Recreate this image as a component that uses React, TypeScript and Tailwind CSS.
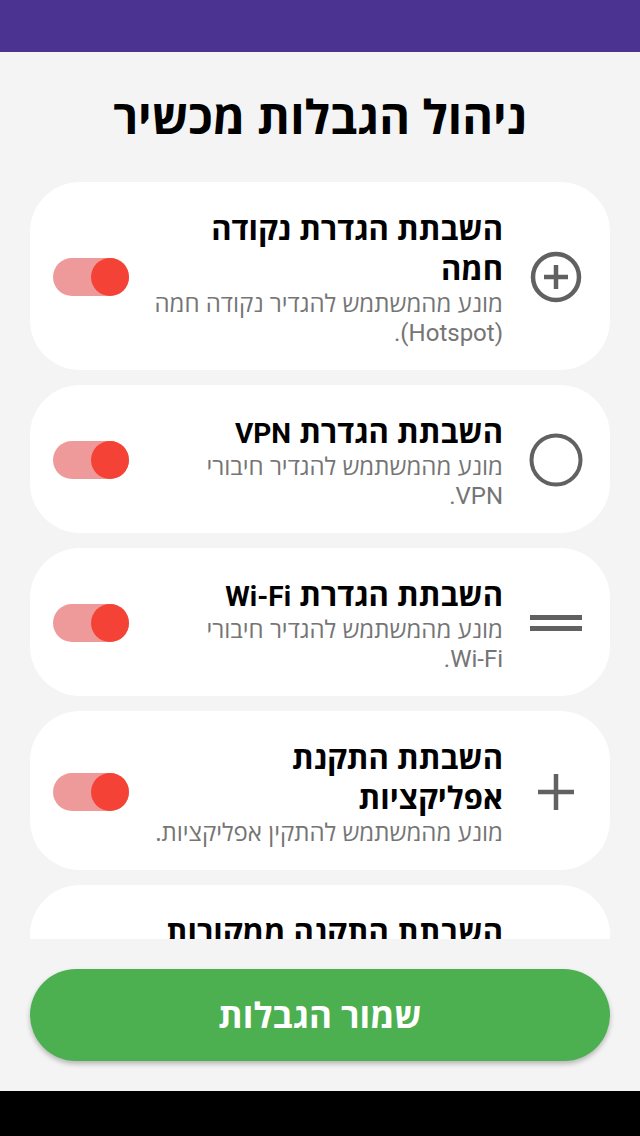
import React from "react";

const HEB = { fontFamily: '"Open Sans", "DejaVu Sans", sans-serif' };
const LAT = { fontFamily: 'Roboto, "Open Sans", sans-serif' };

function Toggle() {
  return (
    <div className="relative w-[76px] h-[38px] rounded-full bg-[#EF9A9A] shrink-0">
      <div className="absolute left-[38px] top-0 w-[38px] h-[38px] rounded-full bg-[#F44336]" />
    </div>
  );
}

function IconAddCircle() {
  return (
    <svg width="54" height="54" viewBox="0 0 54 54" fill="none" stroke="#616161">
      <circle cx="27" cy="27" r="23" strokeWidth="4.5" />
      <path d="M27 15v24M15 27h24" strokeWidth="4.5" />
    </svg>
  );
}
function IconCircle() {
  return (
    <svg width="54" height="54" viewBox="0 0 54 54" fill="none" stroke="#616161">
      <circle cx="27" cy="27" r="24.5" strokeWidth="4" />
    </svg>
  );
}
function IconLines() {
  return (
    <svg width="54" height="54" viewBox="0 0 54 54" fill="#616161">
      <rect x="1" y="19" width="52" height="5" />
      <rect x="1" y="30" width="52" height="5" />
    </svg>
  );
}
function IconPlus() {
  return (
    <svg width="54" height="54" viewBox="0 0 54 54" fill="none" stroke="#616161">
      <path d="M27 9v36M9 27h36" strokeWidth="4.5" />
    </svg>
  );
}

type Item = { title: React.ReactNode; desc: React.ReactNode; icon: React.ReactNode };

const LT = ({ children }: { children: React.ReactNode }) => (
  <span style={LAT} className="text-[28px] leading-none whitespace-nowrap">
    {children}
  </span>
);
const LD = ({ children }: { children: React.ReactNode }) => (
  <span style={LAT} className="text-[24px] leading-none whitespace-nowrap">
    {children}
  </span>
);

const items: Item[] = [
  {
    title: "השבתת הגדרת נקודה חמה",
    desc: (
      <>
        מונע מהמשתמש להגדיר נקודה חמה
        <br />
        <LD>(Hotspot).</LD>
      </>
    ),
    icon: <IconAddCircle />,
  },
  {
    title: (
      <>
        השבתת הגדרת <LT>VPN</LT>
      </>
    ),
    desc: (
      <>
        מונע מהמשתמש להגדיר חיבורי
        <br />
        <LD>VPN.</LD>
      </>
    ),
    icon: <IconCircle />,
  },
  {
    title: (
      <>
        השבתת הגדרת <LT>Wi-Fi</LT>
      </>
    ),
    desc: (
      <>
        מונע מהמשתמש להגדיר חיבורי
        <br />
        <LD>Wi-Fi.</LD>
      </>
    ),
    icon: <IconLines />,
  },
  { title: "השבתת התקנת אפליקציות", desc: "מונע מהמשתמש להתקין אפליקציות.", icon: <IconPlus /> },
  {
    title: "השבתת התקנה ממקורות לא ידועים",
    desc: "מונע מהמשתמש להתקין אפליקציות ממקורות לא ידועים.",
    icon: <IconCircle />,
  },
];

function Card({ item }: { item: Item }) {
  return (
    <div dir="rtl" className="bg-white rounded-[50px] flex items-center pr-[27px] pl-[23px] pt-[26px] pb-[24px] shrink-0">
      <div className="w-[54px] flex items-center justify-center shrink-0">{item.icon}</div>
      <div className="w-[351px] mr-[26px] ml-[23px] shrink-0">
        <div className="text-[31px] leading-[40px] font-bold text-black">{item.title}</div>
        <div className="text-[24px] leading-[29px] text-[#757575]">{item.desc}</div>
      </div>
      <Toggle />
    </div>
  );
}

export default function App() {
  return (
    <div style={HEB} className="w-[640px] h-[1136px] flex flex-col bg-[#f4f4f4] overflow-hidden">
      <div className="h-[52px] bg-[#4B3392] shrink-0" />
      <div className="pt-[38px] h-[90px] shrink-0 text-center text-[47px] leading-[52px] font-bold text-black" dir="rtl">
        ניהול הגבלות מכשיר
      </div>
      <div className="h-[797px] shrink-0 overflow-hidden px-[30px] pt-[40px] flex flex-col gap-[15px]">
        {items.map((it, i) => (
          <Card key={i} item={it} />
        ))}
      </div>
      <div className="px-[30px] pt-[30px] shrink-0">
        <div dir="rtl" className="h-[92px] rounded-[46px] bg-[#4CAF50] flex items-center justify-center text-white text-[35px] font-bold shadow-[0_3px_5px_rgba(0,0,0,0.25)]">
          שמור הגבלות
        </div>
      </div>
      <div className="flex-1" />
      <div className="h-[45px] bg-black shrink-0" />
    </div>
  );
}
